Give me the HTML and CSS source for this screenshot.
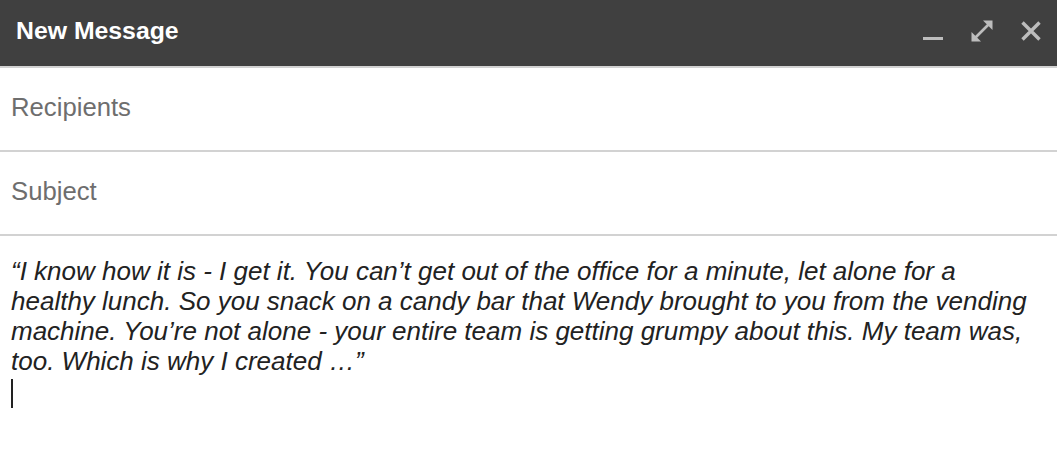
FILE: index.html
```html
<!DOCTYPE html>
<html>
<head>
<meta charset="utf-8">
<link rel="stylesheet" href="styles.css">
</head>
<body>
<div class="compose">
  <div class="header">
    <div class="title">New Message</div>
    <div class="actions">
      <svg class="icon" width="22" height="22" viewBox="0 0 22 22"><rect x="1" y="17" width="20" height="3" fill="#bdbdbd"/></svg>
      <svg class="icon" width="22" height="22" viewBox="0 0 22 22">
        <path d="M4 18 L18 4" stroke="#bdbdbd" stroke-width="2.6"/>
        <path d="M12 0.5 L21.5 0.5 L21.5 10 Z" fill="#bdbdbd"/>
        <path d="M0.5 12 L0.5 21.5 L10 21.5 Z" fill="#bdbdbd"/>
      </svg>
      <svg class="icon" width="22" height="22" viewBox="0 0 22 22">
        <path d="M2.5 2.5 L19.5 19.5 M19.5 2.5 L2.5 19.5" stroke="#bdbdbd" stroke-width="3.4"/>
      </svg>
    </div>
  </div>
  <div class="field">Recipients</div>
  <div class="field">Subject</div>
  <div class="body">
    <p class="text">“I know how it is - I get it. You can’t get out of the office for a minute, let alone for a healthy lunch. So you snack on a candy bar that Wendy brought to you from the vending machine. You’re not alone - your entire team is getting grumpy about this. My team was, too. Which is why I created …”</p>
    <div class="cursor"></div>
  </div>
</div>
</body>
</html>
```
FILE: styles.css
```css
html, body {
  margin: 0;
  padding: 0;
  background: #ffffff;
}
.compose {
  width: 1057px;
  font-family: "Liberation Sans", Arial, sans-serif;
}
.header {
  height: 66px;
  background: #404040;
  border-bottom: 2px solid #d2d2d2;
  display: flex;
  align-items: center;
  justify-content: space-between;
  padding: 0 15px 0 16px;
}
.title {
  color: #ffffff;
  font-weight: bold;
  font-size: 24.8px;
  margin-top: -4px;
}
.actions {
  display: flex;
  align-items: center;
  gap: 27px;
  margin-top: -4px;
}
.icon {
  display: block;
}
.field {
  border-bottom: 2px solid #d2d2d2;
  display: flex;
  align-items: center;
  padding: 0 11px 3px;
  color: #6e6e6e;
  font-size: 25.7px;
  height: 79px;
}
.body {
  padding: 20px 11px 0;
}
.text {
  margin: 0;
  font-style: italic;
  font-size: 26px;
  line-height: 30px;
  color: #222222;
  width: 1030px;
}
.cursor {
  width: 2px;
  height: 29px;
  background: #222222;
  margin-top: 3px;
}
```
